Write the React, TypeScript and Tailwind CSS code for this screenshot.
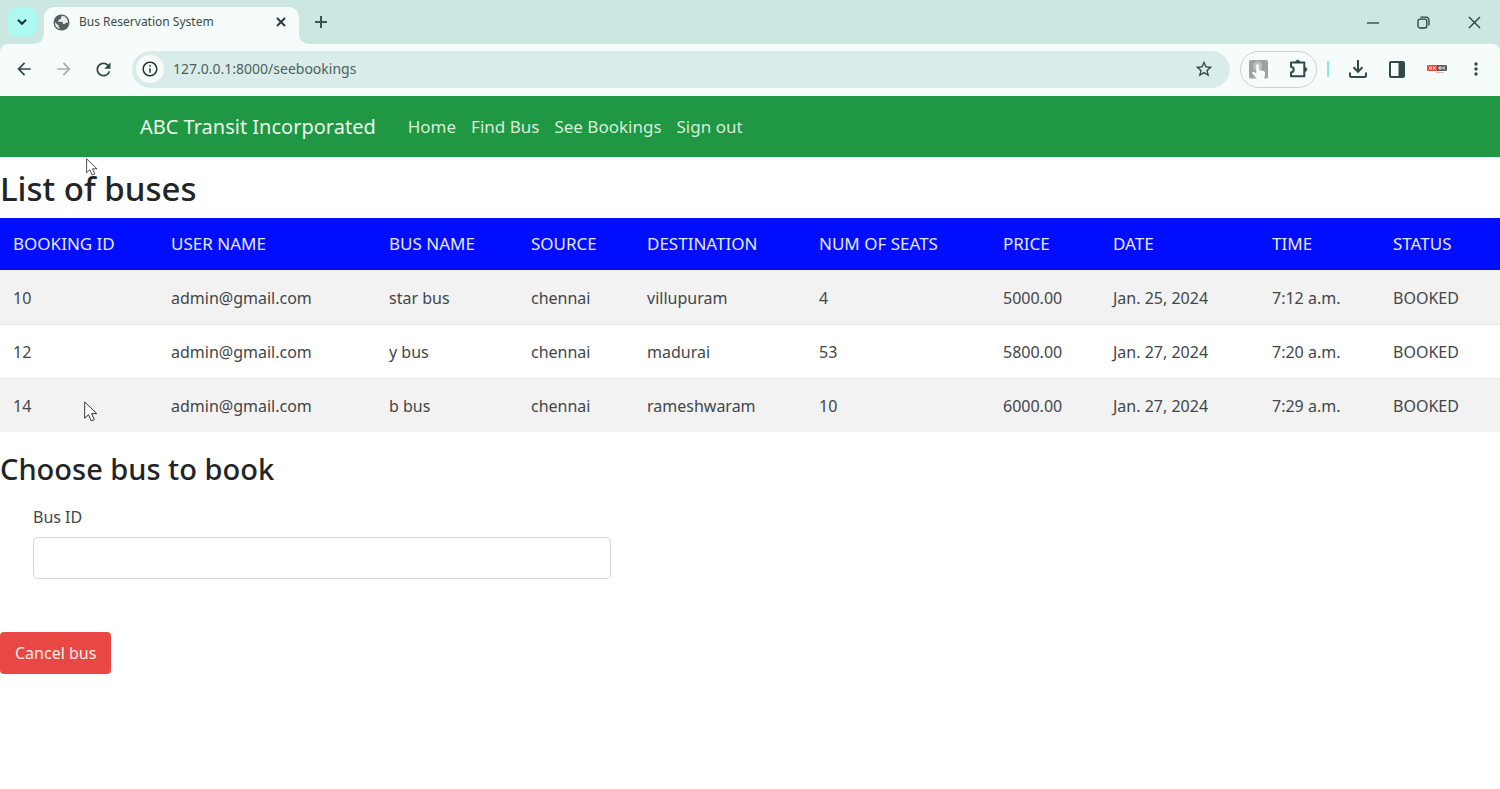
import { useState } from "react";
import { MdArrowBack, MdArrowForward, MdRefresh, MdInfoOutline, MdStarBorder, MdMoreVert } from "react-icons/md";

interface Booking {
    id: number;
    user: string;
    bus: string;
    source: string;
    destination: string;
    seats: number;
    price: string;
    date: string;
    time: string;
    status: string;
}

const bookings: Booking[] = [
    { id: 10, user: "admin@gmail.com", bus: "star bus", source: "chennai", destination: "villupuram", seats: 4, price: "5000.00", date: "Jan. 25, 2024", time: "7:12 a.m.", status: "BOOKED" },
    { id: 12, user: "admin@gmail.com", bus: "y bus", source: "chennai", destination: "madurai", seats: 53, price: "5800.00", date: "Jan. 27, 2024", time: "7:20 a.m.", status: "BOOKED" },
    { id: 14, user: "admin@gmail.com", bus: "b bus", source: "chennai", destination: "rameshwaram", seats: 10, price: "6000.00", date: "Jan. 27, 2024", time: "7:29 a.m.", status: "BOOKED" },
];

const columns = [
    { label: "BOOKING ID", width: "w-[158px]" },
    { label: "USER NAME", width: "w-[218px]" },
    { label: "BUS NAME", width: "w-[142px]" },
    { label: "SOURCE", width: "w-[116px]" },
    { label: "DESTINATION", width: "w-[172px]" },
    { label: "NUM OF SEATS", width: "w-[184px]" },
    { label: "PRICE", width: "w-[110px]" },
    { label: "DATE", width: "w-[159px]" },
    { label: "TIME", width: "w-[121px]" },
    { label: "STATUS", width: "w-[120px]" },
];

const links = ["Home", "Find Bus", "See Bookings", "Sign out"];

const Cursor = ({ className }: { className: string }) => (
    <svg className={className} viewBox="0 0 14 21" fill="#fff" stroke="#333" strokeWidth="1" aria-hidden="true">
        <path d="M.7 1v16.2l3.8-3.5 2.8 6.2 3-1.3-2.7-6h5.2z" />
    </svg>
);

const TabStrip = () => (
    <div className="flex h-11 items-end bg-[#cce6e1] pl-[7px] text-[#26403c]">
        <button aria-label="Search tabs" className="mb-[7px] flex size-[30px] items-center justify-center rounded-[10px] bg-[#aef8f2]">
            <svg width="12" height="8" viewBox="0 0 12 8" fill="none" stroke="#17302d" strokeWidth="2"><path d="M2 1.8l4 4 4-4" /></svg>
        </button>
        <div className="relative ml-[7px] flex h-[37px] w-[255px] items-center rounded-t-[10px] bg-[#f5fcf9] pr-[9px] pb-[7px] pl-[9px]">
            <svg className="absolute bottom-0 -left-[10px]" width="10" height="10"><path d="M10 0v10H0A10 10 0 0 0 10 0z" fill="#f5fcf9" /></svg>
            <svg className="absolute -right-[10px] bottom-0" width="10" height="10"><path d="M0 0v10h10A10 10 0 0 1 0 0z" fill="#f5fcf9" /></svg>
            <svg width="17" height="17" viewBox="0 0 17 17" aria-hidden="true">
                <circle cx="8.5" cy="8.5" r="8" fill="#56605f" />
                <path d="M9.500 1.800c-1 .4-1.600 1.200-1.400 2.200.1.800-.8 1.200-1.600 1.300-.6.1-.4 1.200-1.100 1.400-.6.200-.9.700-.4 1.100h3.600c1 0 1.300.8 1.300 1.600 0 .7.8.7 1.500.7.900 0 .8-1.300 1.700-1.300h1.900A6.600 6.600 0 0 0 9.500 1.800z" fill="#e6edeb" />
                <path d="M2 8.300l3.600 3.300v1c0 .8.600 1.300 1.400 1.300v1.100A6.600 6.600 0 0 1 2 8.300z" fill="#e6edeb" />
            </svg>
            <span className="ml-[9px] flex-1 font-['Noto_Sans',sans-serif] text-xs text-[#3c4b49]">Bus Reservation System</span>
            <button aria-label="Close tab" className="p-1">
                <svg width="10" height="10" viewBox="0 0 10 10" stroke="currentColor" strokeWidth="2"><path d="M1 1l8 8M9 1L1 9" /></svg>
            </button>
        </div>
        <button aria-label="New tab" className="mb-4 ml-4">
            <svg width="12" height="12" viewBox="0 0 12 12" stroke="#3a5450" strokeWidth="2"><path d="M6 0v12M0 6h12" /></svg>
        </button>
        <div className="mb-[15px] ml-auto flex items-center gap-[38px] pr-[19px]">
            <button aria-label="Minimize">
                <svg width="12" height="13" viewBox="0 0 12 13" stroke="currentColor" strokeWidth="1.3"><path d="M0 7h12" /></svg>
            </button>
            <button aria-label="Restore">
                <svg width="13" height="13" viewBox="0 0 13 13" fill="none" stroke="currentColor" strokeWidth="1.3">
                    <rect x="1" y="3.2" width="8.8" height="8.8" rx="2" />
                    <path d="M3.4 1.2h5.400a3.200 3.200 0 0 1 3.200 3.200v5.200" />
                </svg>
            </button>
            <button aria-label="Close">
                <svg width="13" height="13" viewBox="0 0 13 13" stroke="currentColor" strokeWidth="1.4"><path d="M1 1l11 11M12 1L1 12" /></svg>
            </button>
        </div>
    </div>
);

const Toolbar = () => {
    const [url, setUrl] = useState("127.0.0.1:8000/seebookings");

    return (
        <div className="bg-[#cce6e1]">
            <div className="flex h-[52px] items-center rounded-t-lg bg-[#f5fcf9] pr-[14px] pb-0.5 pl-[14px] text-[#2f4a47]">
                <button aria-label="Back"><MdArrowBack size={20} /></button>
                <button aria-label="Forward" className="ml-5 text-[#a5b1ae]"><MdArrowForward size={20} /></button>
                <button aria-label="Reload" className="ml-[19px]"><MdRefresh size={21} /></button>
                <div className="ml-[18px] flex h-[37px] flex-1 items-center rounded-full bg-[#d9ece9] pr-4 pl-1">
                    <button aria-label="View site information" className="flex size-7 items-center justify-center rounded-full bg-[#f5fcf9] text-[#26312f]">
                        <MdInfoOutline size={18} />
                    </button>
                    <input
                        aria-label="Address"
                        className="ml-[9px] flex-1 bg-transparent font-['Noto_Sans',sans-serif] text-sm text-[#4d6260] outline-none"
                        value={url}
                        onChange={(e) => setUrl(e.target.value)}
                    />
                    <button aria-label="Bookmark this tab"><MdStarBorder size={20} /></button>
                </div>
                <div className="ml-[10px] flex h-[37px] w-[77px] items-center justify-between rounded-full border border-[#c9d2d0] px-2">
                    <button aria-label="Click tool">
                        <svg width="19" height="19" viewBox="0 0 19 19">
                            <path d="M2 0h15q2 0 2 2v15q0 1.500-1.500 1.500H2Q0 18.500 0 17V2Q0 0 2 0z" fill="#9fa1a1" />
                            <circle cx="8.500" cy="6" r="4.500" fill="#bfc1c1" />
                            <path d="M7.200 5.500c0-1.800 2.600-1.800 2.600 0v4.300l4.700 1.200c1.500.5 1.800 1.200 1.600 2.800L15.200 19H8L3.400 13.500c-.9-1.200.8-2.400 2-1.400l1.800 1.400z" fill="#f5fcf9" />
                        </svg>
                    </button>
                    <button aria-label="Extensions">
                        <svg width="19" height="20" viewBox="0 0 19 20">
                            <path d="M2 3.500h13.300v13.700H2v-3.700c3.600-.5 3.600-5.300 0-5.800z" fill="none" stroke="currentColor" strokeWidth="2" strokeLinejoin="round" />
                            <path d="M6.700 3a2 2 0 0 1 4 0zM16 8.400a2 2 0 0 1 0 4z" fill="currentColor" stroke="currentColor" strokeWidth=".5" />
                        </svg>
                    </button>
                </div>
                <div className="ml-[10px] h-4 w-0.5 bg-[#8beae4]" />
                <button aria-label="Downloads" className="ml-5">
                    <svg width="18" height="18" viewBox="0 0 18 18" fill="none" stroke="currentColor" strokeWidth="2">
                        <path d="M9 0v11.500M4.500 7.300L9 11.800l4.500-4.500M1 12.500v3.300q0 1.200 1.200 1.200h13.600q1.200 0 1.200-1.200v-3.300" />
                    </svg>
                </button>
                <button aria-label="Side panel" className="ml-[22px]">
                    <svg width="16" height="17" viewBox="0 0 16 17">
                        <rect x="1" y="1" width="14" height="15" rx="1" fill="none" stroke="currentColor" strokeWidth="2" />
                        <path d="M9.500 1H15v15H9.500z" fill="currentColor" />
                    </svg>
                </button>
                <button aria-label="Profile" className="ml-[22px]">
                    <svg width="20" height="10" viewBox="0 0 20 10">
                        <path d="M1 1h9v6H1q-1 0-1-1V2q0-1 1-1z" fill="#ea4d3e" />
                        <path d="M10 1h9q1 0 1 1v4q0 1-1 1h-9z" fill="#5c5c5c" />
                        <path d="M2.500 3h2v2h-2zM6.500 2.500v3M8.800 2.500L7 4l1.800 1.500M12 3h2v2h-2zM16 2.500v3M18.300 2.500L16.500 4l1.800 1.500" fill="none" stroke="#fff" strokeWidth=".8" />
                        <path d="M9 8.500h8" stroke="#f3b5ac" />
                    </svg>
                </button>
                <button aria-label="Menu" className="ml-[19px]"><MdMoreVert size={20} /></button>
            </div>
        </div>
    );
};

export default function App() {
    const [busId, setBusId] = useState("");

    return (
        <div className="relative min-h-screen bg-white font-['Noto_Sans',sans-serif] text-base text-[#212529]">
            <TabStrip />
            <Toolbar />

            <nav className="flex h-[61px] items-center bg-[#209742] pl-[140px]">
                <a href="#" className="text-xl text-[#eaf7ed]">ABC Transit Incorporated</a>
                <div className="ml-8 flex gap-[15px] text-[17px] text-[#d5eedb]">
                    {links.map((link) => (
                        <a key={link} href="#">{link}</a>
                    ))}
                </div>
            </nav>

            <main>
                <h1 className="pt-[10px] pb-[7px] text-[33px] leading-[44px] font-medium">List of buses</h1>
                <table className="w-full table-fixed text-left">
                    <thead className="bg-[#000dff] text-[17px] text-[#e6e8ff]">
                        <tr className="h-[52px]">
                            {columns.map((col) => (
                                <th key={col.label} className={`${col.width} pl-[13px] font-normal`}>{col.label}</th>
                            ))}
                        </tr>
                    </thead>
                    <tbody className="text-[#42464a]">
                        {bookings.map((b) => (
                            <tr key={b.id} className="h-[54px] border-b border-[#e6e8ea] last:border-b-0 odd:bg-[#f2f2f2]">
                                {Object.values(b).map((value, i) => (
                                    <td key={i} className="pt-0.5 pl-[13px]">{value}</td>
                                ))}
                            </tr>
                        ))}
                    </tbody>
                </table>

                <h2 className="pt-[15px] text-[29px] leading-[44px] font-medium">Choose bus to book</h2>
                <form onSubmit={(e) => e.preventDefault()}>
                    <div className="ml-[33px] max-w-[578px] pt-[14px]">
                        <label htmlFor="bus-id" className="block text-[#42464a]">Bus ID</label>
                        <input
                            id="bus-id"
                            className="mt-2 h-[42px] w-full rounded border border-[#d5d8db] bg-white px-3 outline-none"
                            value={busId}
                            onChange={(e) => setBusId(e.target.value)}
                        />
                    </div>
                    <button type="submit" className="mt-[53px] h-[42px] rounded bg-[#e84743] px-[15px] text-[#fdeceb]">Cancel bus</button>
                </form>
            </main>

            <Cursor className="absolute top-[158px] left-[86px] h-[18px] w-3" />
            <Cursor className="absolute top-[401px] left-[84px] h-[21px] w-[14px]" />
        </div>
    );
}
